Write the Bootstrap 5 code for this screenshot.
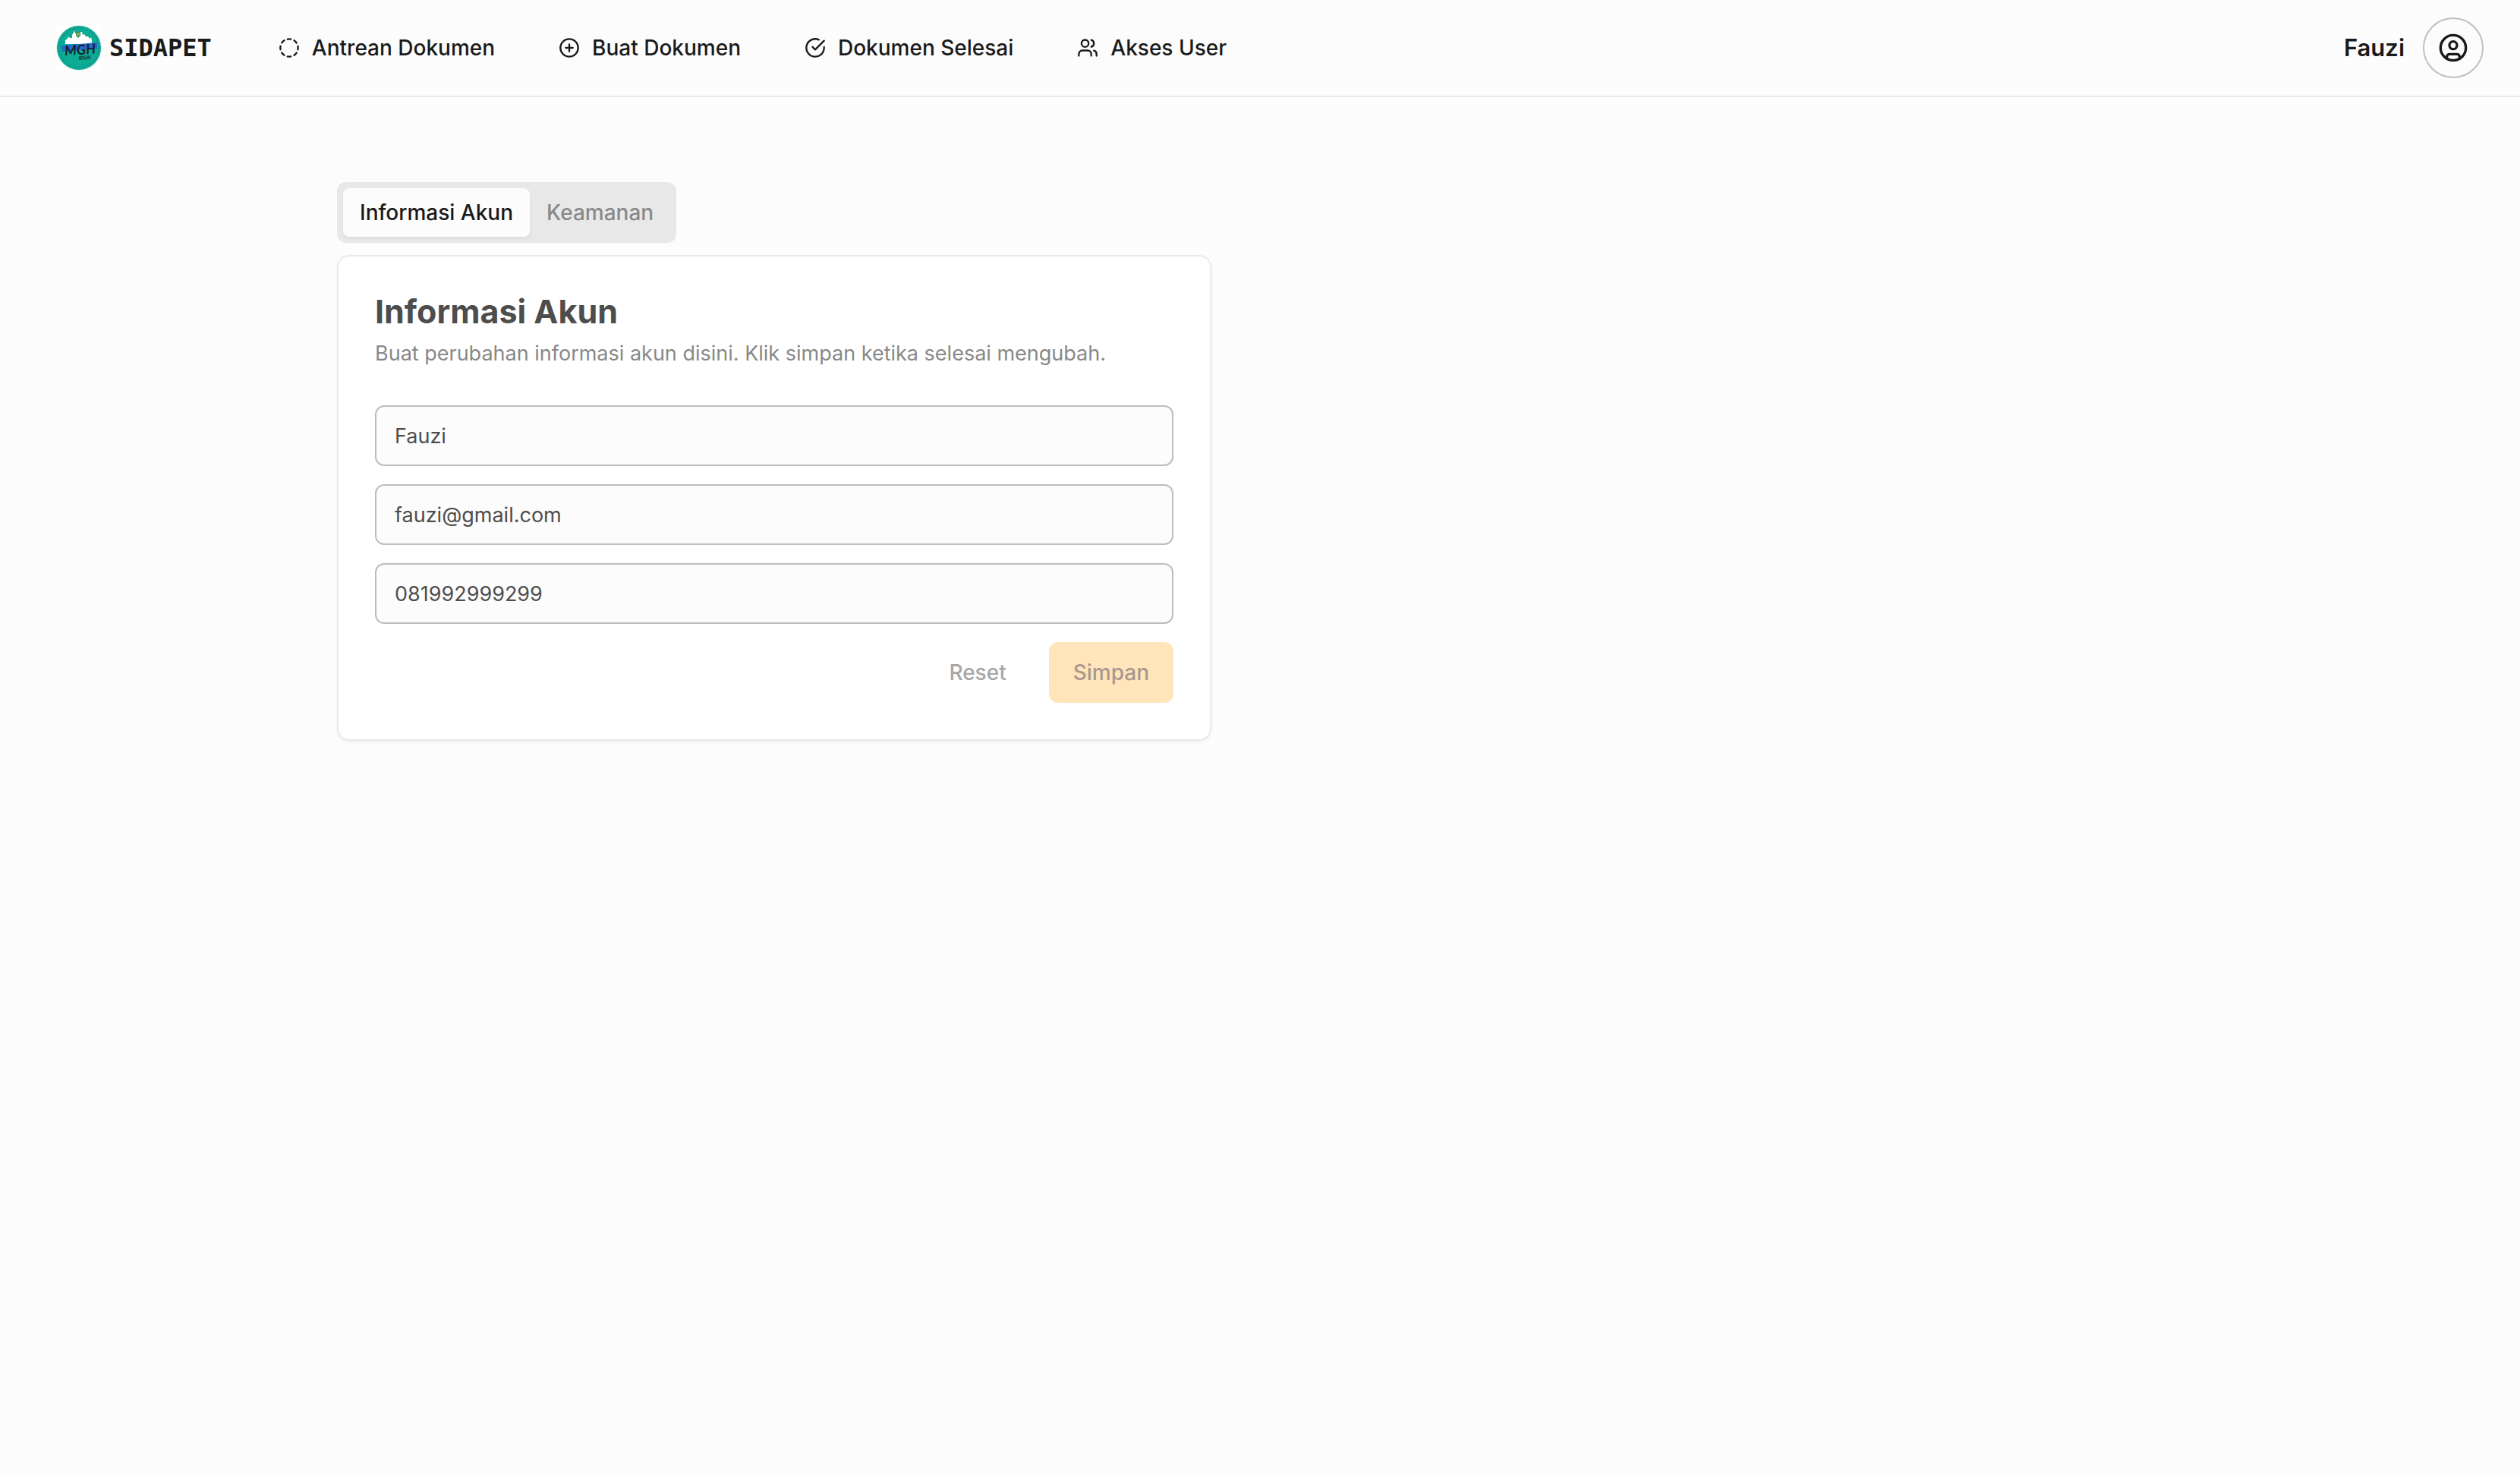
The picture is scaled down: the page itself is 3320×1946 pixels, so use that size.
<!DOCTYPE html>
<html lang="id">
<head>
<meta charset="utf-8">
<meta name="viewport" content="width=device-width, initial-scale=1">
<title>SIDAPET</title>
<link href="https://cdn.jsdelivr.net/npm/bootstrap@5.3.0/dist/css/bootstrap.min.css" rel="stylesheet">
<style>
  body { background: #fcfcfc; color: #1a1a1a; font-family: Inter, "Liberation Sans", sans-serif; font-size: 28px; line-height: 40px; }
  .topbar { min-height: 128px; padding: 0 48px; border-bottom: 2px solid #eaeaea; }
  .topbar svg.line-icon, .profile svg { fill: none; stroke: currentColor; stroke-width: 2; stroke-linecap: round; stroke-linejoin: round; }
  .brand { gap: 10px; margin-left: 26px; font-family: "DejaVu Sans Mono", monospace; font-weight: 700; font-size: 32px; color: #1a1a1a; }
  .menu { gap: 84px; margin-left: 88px; }
  .menu .nav-link { gap: 16px; padding: 0; color: #1a1a1a; font-weight: 500; }
  .line-icon { width: 28px; height: 28px; }
  .user-name { font-size: 31px; font-weight: 600; }
  .profile { width: 80px; height: 80px; padding: 0; border: 2px solid #bfbfbf; border-radius: 50%; color: #1a1a1a; }
  .profile svg { width: 40px; height: 40px; }
  .page { max-width: 2560px; padding: 112px 64px; }
  .panel { max-width: 1152px; }
  .tabs { padding: 8px; border-radius: 12px; background: #e8e8e8; }
  .tabs .nav-link { padding: 12px 22px; border-radius: 8px; color: #898989; font-weight: 500; }
  .tabs .nav-link.active { background: #fcfcfc; color: #1a1a1a; box-shadow: 0 2px 4px rgba(0,0,0,.06); }
  .account { margin-top: 16px; border: 2px solid #eaeaea; border-radius: 16px; box-shadow: 0 2px 4px rgba(0,0,0,.05); }
  .account .card-body { padding: 48px; }
  .account h1 { margin-bottom: 12px; font-size: 43px; line-height: 48px; font-weight: 700; color: #4d4d4d; }
  .hint { margin-bottom: 48px; color: #888; font-size: 27px; }
  .account form { gap: 24px; }
  .account .form-control { height: 80px; padding: 0 24px; border: 2px solid #bdbdbd; border-radius: 12px; background: #fcfcfc; color: #4d4d4d; font-size: 27px; }
  .actions { gap: 24px; }
  .actions .btn { height: 80px; padding: 0 32px; border: 0; border-radius: 12px; font-size: 28px; font-weight: 500; opacity: 1; }
  .actions .reset, .actions .reset:disabled { color: #a6a6a6; }
  .actions .save, .actions .save:disabled { background: #ffe5b9; color: #a8988f; }
</style>
<script src="https://cdn.jsdelivr.net/npm/bootstrap@5.3.0/dist/js/bootstrap.bundle.min.js"></script>
</head>
<body>
<header class="topbar d-flex align-items-center">
  <a class="brand d-flex align-items-center text-decoration-none" href="#">
    <svg width="60" height="60" viewBox="0 0 60 60" aria-hidden="true">
      <rect width="60" height="60" fill="#fff"/>
      <circle cx="30" cy="30" r="30" fill="#e3eeee"/>
      <circle cx="30" cy="30" r="29" fill="#0bab94"/>
      <circle cx="30" cy="30" r="26" fill="none" stroke="#16736d" stroke-width="2" stroke-dasharray="1 3" opacity=".7"/>
      <path d="M12 25v-5l3-2 1-3 2 2h3v-4l2-3 1-3 1 4h5v-2h4l1 4 2-1 2 3h3l2 3 2-2 1 5v4z" fill="#fff"/>
      <path d="M26 9h6v5l-3 3-3-3z" fill="#388b65"/><path d="M27 11h4M27 13h4" stroke="#edcf45"/>
      <path d="M7 27l47-4v8l-46 4z" fill="#2868ca"/>
      <g transform="rotate(-4 30 32)" font-family="Lato, sans-serif" font-style="italic" fill="#122330">
        <text x="11" y="39" font-size="18" font-weight="700">MGH</text>
        <text x="29" y="46" font-size="7" font-weight="700">BISA!</text>
      </g>
    </svg>
    <span>SIDAPET</span>
  </a>
  <nav class="menu nav flex-nowrap">
    <a class="nav-link d-flex align-items-center" href="#"><svg class="line-icon" viewBox="0 0 24 24"><path d="M10.100 2.182a10 10 0 0 1 3.800 0M13.900 21.818a10 10 0 0 1-3.800 0M17.609 3.721a10 10 0 0 1 2.690 2.700M2.182 13.900a10 10 0 0 1 0-3.800M20.279 17.609a10 10 0 0 1-2.700 2.690M21.818 10.100a10 10 0 0 1 0 3.800M3.721 6.391a10 10 0 0 1 2.700-2.690M6.391 20.279a10 10 0 0 1-2.690-2.700"/></svg>Antrean Dokumen</a>
    <a class="nav-link d-flex align-items-center" href="#"><svg class="line-icon" viewBox="0 0 24 24"><circle cx="12" cy="12" r="10"/><path d="M8 12h8M12 8v8"/></svg>Buat Dokumen</a>
    <a class="nav-link d-flex align-items-center" href="#"><svg class="line-icon" viewBox="0 0 24 24"><path d="M22 11.080V12a10 10 0 1 1-5.930-9.140M9 11l3 3L22 4"/></svg>Dokumen Selesai</a>
    <a class="nav-link d-flex align-items-center" href="#"><svg class="line-icon" viewBox="0 0 24 24"><path d="M16 21v-2a4 4 0 0 0-4-4H6a4 4 0 0 0-4 4v2"/><circle cx="9" cy="7" r="4"/><path d="M22 21v-2a4 4 0 0 0-3-3.870M16 3.130a4 4 0 0 1 0 7.750"/></svg>Akses User</a>
  </nav>
  <div class="d-flex align-items-center gap-4 ms-auto">
    <span class="user-name">Fauzi</span>
    <button class="profile btn d-flex align-items-center justify-content-center" type="button" aria-label="Profil">
      <svg viewBox="0 0 24 24"><circle cx="12" cy="12" r="10"/><circle cx="12" cy="10" r="3"/><path d="M7 20.662V19a2 2 0 0 1 2-2h6a2 2 0 0 1 2 2v1.662"/></svg>
    </button>
  </div>
</header>
<main class="page container-fluid">
  <div class="panel">
    <div class="tabs nav nav-pills d-inline-flex align-top" role="tablist">
      <button class="nav-link active" type="button" role="tab" aria-selected="true">Informasi Akun</button>
      <button class="nav-link" type="button" role="tab" aria-selected="false">Keamanan</button>
    </div>
    <section class="account card">
      <div class="card-body">
        <h1>Informasi Akun</h1>
        <p class="hint">Buat perubahan informasi akun disini. Klik simpan ketika selesai mengubah.</p>
        <form class="d-flex flex-column">
          <input class="form-control" type="text" aria-label="Nama" value="Fauzi">
          <input class="form-control" type="email" aria-label="Email" value="fauzi@gmail.com">
          <input class="form-control" type="tel" aria-label="Telepon" value="081992999299">
          <div class="actions d-flex justify-content-end">
            <button class="reset btn" type="reset" disabled>Reset</button>
            <button class="save btn" type="submit" disabled>Simpan</button>
          </div>
        </form>
      </div>
    </section>
  </div>
</main>
</body>
</html>
